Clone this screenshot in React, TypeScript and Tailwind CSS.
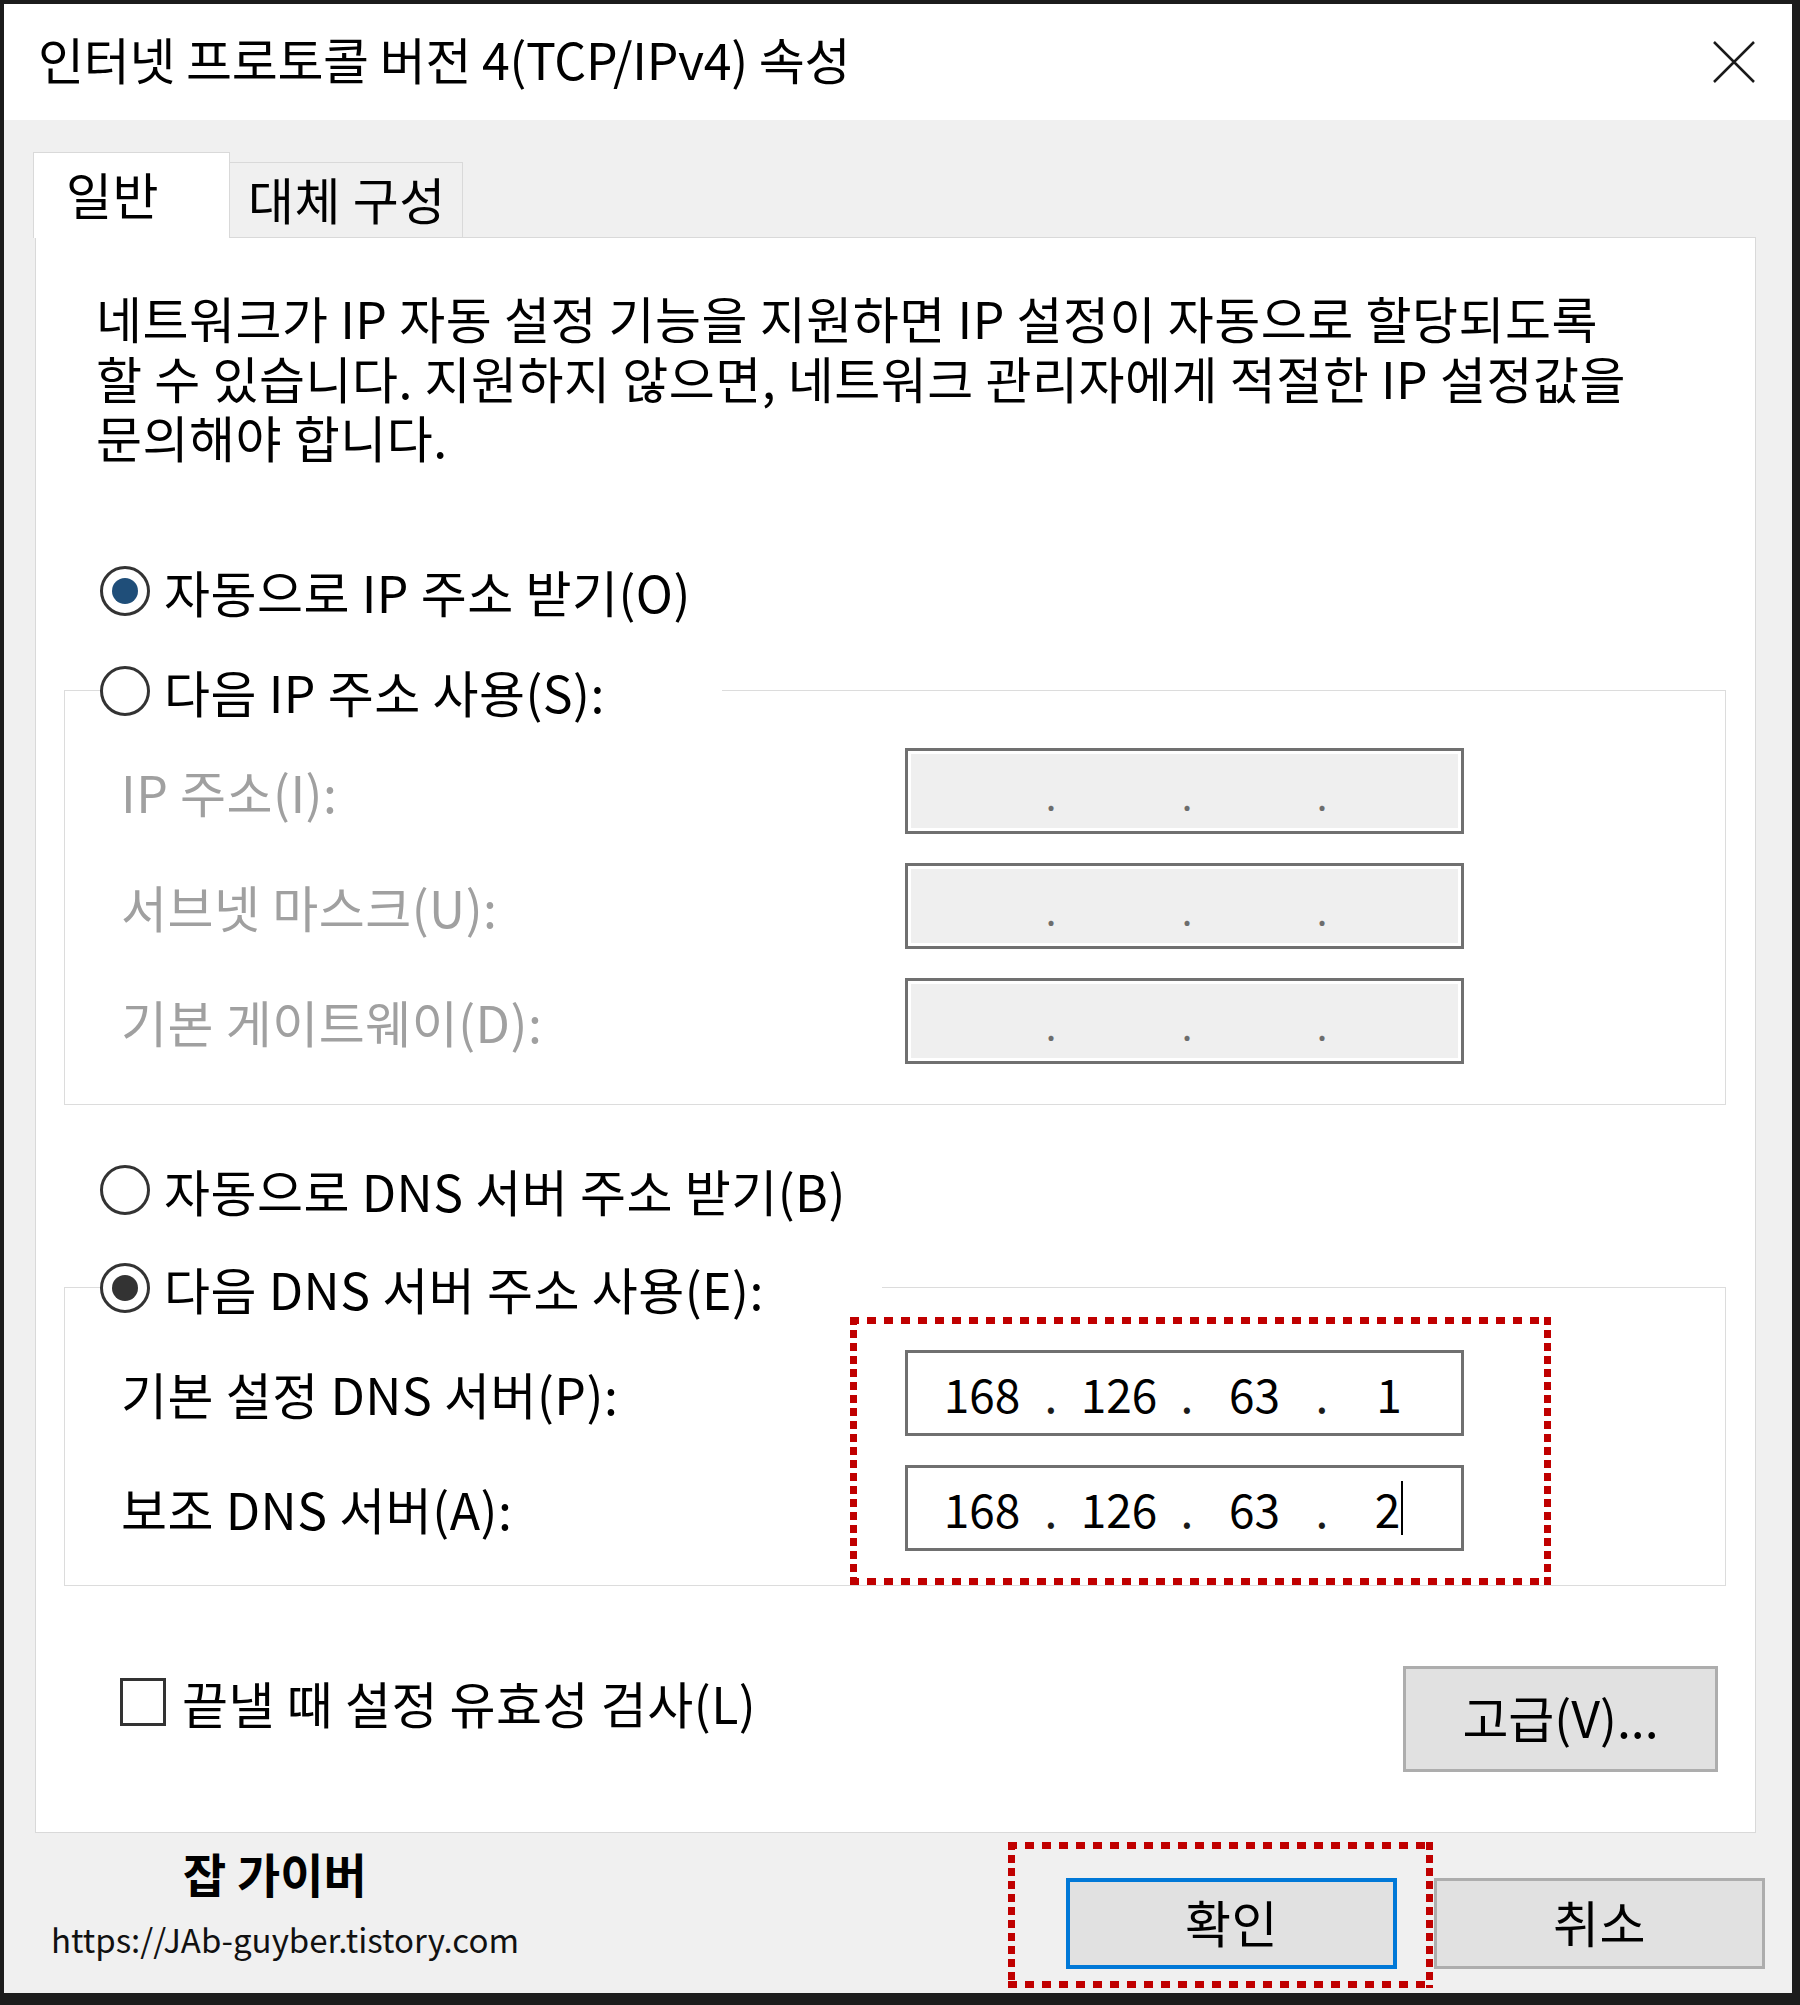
import React from 'react';

const Radio = ({ checked, dot }: { checked?: boolean; dot?: string }) => (
  <span className="w-[50px] h-[50px] rounded-full border-[3px] border-[#333333] bg-white flex items-center justify-center shrink-0">
    {checked && <span className={`w-[26px] h-[26px] rounded-full ${dot}`} />}
  </span>
);

const DottedBox = ({ className, w, h }: { className: string; w: number; h: number }) => (
  <div className={`absolute pointer-events-none ${className}`}>
    <svg width={w} height={h} viewBox={`0 0 ${w} ${h}`}>
      <g stroke="#c00000" strokeWidth={7} fill="none">
        <line x1={0} y1={3.5} x2={w} y2={3.5} strokeDasharray="9 8" />
        <line x1={0} y1={h - 3.5} x2={w} y2={h - 3.5} strokeDasharray="9 8" />
        <line x1={3.5} y1={0} x2={3.5} y2={h} strokeDasharray="8 5" />
        <line x1={w - 3.5} y1={0} x2={w - 3.5} y2={h} strokeDasharray="8 5" />
      </g>
    </svg>
  </div>
);

const IpBox = ({ values, disabled, caret }: { values: string[]; disabled?: boolean; caret?: boolean }) => {
  const dot = disabled ? 'w-[14px] text-center text-[#6d6d6d] text-[38px]' : 'w-[14px] text-center text-[#1a1a1a]';
  return (
    <div
      className={`w-[559px] h-[86px] border-[3px] border-[#707070] flex items-center pl-[12px] text-[46px] tracking-normal ${
        disabled ? 'bg-[#efefef] outline-[3px] outline-white -outline-offset-[6px] pt-[8px]' : 'bg-white'
      }`}
    >
      <span className="w-[124px] text-center">{values[0]}</span>
      <span className={dot}>.</span>
      <span className="w-[122px] text-center">{values[1]}</span>
      <span className={dot}>.</span>
      <span className="w-[121px] text-center">{values[2]}</span>
      <span className={dot}>.</span>
      <span className="w-[120px] flex justify-center items-center">
        {values[3]}
        {caret && <span className="w-[2px] h-[54px] bg-black ml-[1px]" />}
      </span>
    </div>
  );
};

const FieldRow = ({ label, muted, children }: { label: string; muted?: boolean; children: React.ReactNode }) => (
  <div className="flex items-center h-[86px]">
    <span className={`w-[840px] pl-[56px] whitespace-nowrap ${muted ? 'text-[#a0a0a0]' : 'text-black'}`}>{label}</span>
    {children}
  </div>
);

const App = () => {
  return (
    <div className="relative w-[1800px] h-[2005px] bg-[#1c1c1c] pt-[4px] pl-[4px] pr-[8px] pb-[12px] font-['Noto_Sans_CJK_KR',sans-serif] text-[50px] tracking-[0.5px] leading-none text-black">
      <div className="h-full bg-[#f0f0f0] flex flex-col">
        {/* title bar */}
        <div className="h-[116px] bg-white flex items-center justify-between pl-[34px] pr-[37px] shrink-0">
          <span className="whitespace-nowrap pb-[8px] tracking-[-0.3px]">인터넷 프로토콜 버전 4(TCP/IPv4) 속성</span>
          <svg width="42" height="42" viewBox="0 0 42 42">
            <path d="M1 1 L41 41 M41 1 L1 41" stroke="#1a1a1a" strokeWidth={2.5} fill="none" />
          </svg>
        </div>

        {/* tabs */}
        <div className="mt-[32px] h-[85px] pl-[29px] flex shrink-0">
          <div className="relative z-10 w-[197px] h-[86px] bg-white border border-b-0 border-[#d9d9d9] flex items-center pl-[32px] pb-[6px]">
            일반
          </div>
          <div className="w-[233px] h-[75px] self-end border border-l-0 border-b-0 border-[#d9d9d9] flex items-center pl-[18px] pb-[4px]">
            대체 구성
          </div>
        </div>

        {/* panel */}
        <div className="ml-[31px] w-[1721px] h-[1596px] bg-white border border-[#d9d9d9] flex flex-col shrink-0">
          <p className="mt-[50px] pl-[60px] leading-[59.5px] whitespace-nowrap">
            네트워크가 IP 자동 설정 기능을 지원하면 IP 설정이 자동으로 할당되도록
            <br />
            할 수 있습니다. 지원하지 않으면, 네트워크 관리자에게 적절한 IP 설정값을
            <br />
            문의해야 합니다.
          </p>

          <div className="mt-[94px] pl-[64px] h-[60px] flex items-center gap-[14px]">
            <Radio checked dot="bg-[#1f4e79]" />
            <span>자동으로 IP 주소 받기(O)</span>
          </div>

          <fieldset className="mt-[40px] ml-[28px] w-[1662px] border border-[#dcdcdc] pb-[40px]">
            <legend className="ml-[35px] w-[622px] h-[60px] flex items-center gap-[14px]">
              <Radio />
              <span>다음 IP 주소 사용(S):</span>
            </legend>
            <div className="mt-[27px] flex flex-col gap-[29px]">
              <FieldRow label="IP 주소(I):" muted>
                <IpBox values={['', '', '', '']} disabled />
              </FieldRow>
              <FieldRow label="서브넷 마스크(U):" muted>
                <IpBox values={['', '', '', '']} disabled />
              </FieldRow>
              <FieldRow label="기본 게이트웨이(D):" muted>
                <IpBox values={['', '', '', '']} disabled />
              </FieldRow>
            </div>
          </fieldset>

          <div className="mt-[55px] pl-[64px] h-[60px] flex items-center gap-[14px]">
            <Radio />
            <span>자동으로 DNS 서버 주소 받기(B)</span>
          </div>

          <fieldset className="mt-[38px] ml-[28px] w-[1662px] border border-[#dcdcdc] pb-[34px]">
            <legend className="ml-[35px] w-[782px] h-[60px] flex items-center gap-[14px]">
              <Radio checked dot="bg-[#333333]" />
              <span>다음 DNS 서버 주소 사용(E):</span>
            </legend>
            <div className="mt-[32px] flex flex-col gap-[29px]">
              <FieldRow label="기본 설정 DNS 서버(P):">
                <IpBox values={['168', '126', '63', '1']} />
              </FieldRow>
              <FieldRow label="보조 DNS 서버(A):">
                <IpBox values={['168', '126', '63', '2']} caret />
              </FieldRow>
            </div>
          </fieldset>

          <div className="mt-[80px] flex justify-between items-start">
            <div className="pl-[84px] mt-[11px] flex items-center gap-[16px]">
              <span className="w-[46px] h-[48px] border-[3px] border-[#333333] bg-white" />
              <span>끝낼 때 설정 유효성 검사(L)</span>
            </div>
            <button className="mr-[37px] w-[315px] h-[106px] bg-[#e1e1e1] border-[3px] border-[#adadad] flex items-center justify-center pb-[6px] tracking-normal">
              고급(V)...
            </button>
          </div>
        </div>

        {/* footer */}
        <div className="flex-1 flex justify-between">
          <div className="flex flex-col">
            <span className="ml-[179px] mt-[15px] leading-[50px] text-[47px] font-bold tracking-normal">잡 가이버</span>
            <span className="ml-[47px] mt-[21px] leading-[40px] text-[33px] text-[#111111] tracking-normal">https://JAb-guyber.tistory.com</span>
          </div>
          <div className="mt-[45px] mr-[27px] flex gap-[37px]">
            <button className="w-[331px] h-[91px] bg-[#e1e1e1] border-[4px] border-[#0078d7] flex items-center justify-center pb-[6px]">
              확인
            </button>
            <button className="w-[331px] h-[91px] bg-[#e1e1e1] border-[3px] border-[#adadad] flex items-center justify-center pb-[6px]">
              취소
            </button>
          </div>
        </div>
      </div>

      <DottedBox className="left-[850px] top-[1317px]" w={701} h={268} />
      <DottedBox className="left-[1008px] top-[1842px]" w={425} h={146} />
    </div>
  );
};

export default App;
